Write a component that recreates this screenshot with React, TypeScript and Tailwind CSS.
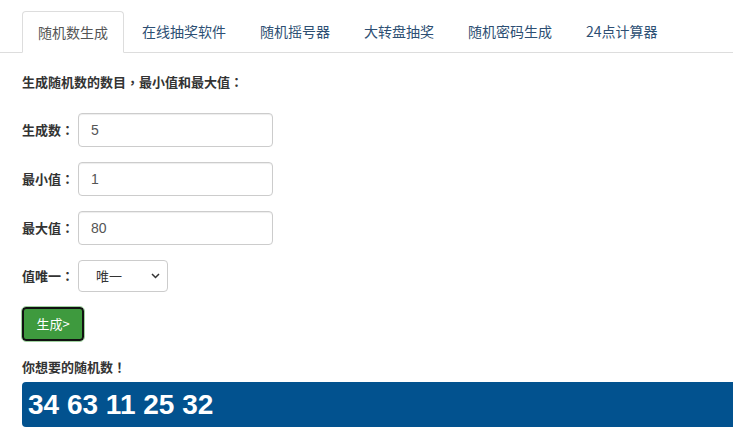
import React from "react";

const tabs = ["随机数生成", "在线抽奖软件", "随机摇号器", "大转盘抽奖", "随机密码生成", "24点计算器"];

const font = { fontFamily: '"Noto Sans CJK SC", "Liberation Sans", sans-serif' };

// centred full-width punctuation, like the reference's font
const P = ({ c }: { c: string }) => <span className="font-['Noto_Sans_CJK_TC',sans-serif]">{c}</span>;

function Field({ label, value }: { label: string; value: string }) {
  return (
    <div className="flex items-center h-[34px] mb-[15px]">
      <label className="w-[56px] text-[13px] font-bold text-[#333]">
        {label}
        <P c="：" />
      </label>
      <input
        readOnly
        value={value}
        className="w-[195px] h-[34px] border border-[#ccc] rounded-[4px] px-[12px] text-[14px] text-[#555] bg-white font-['Liberation_Sans',sans-serif] shadow-[inset_0_1px_1px_rgba(0,0,0,0.075)] outline-none"
      />
    </div>
  );
}

export default function App() {
  return (
    <div className="w-[733px] h-[440px] bg-white overflow-hidden" style={font}>
      {/* Tabs */}
      <div className="pt-[11px] pl-[22px] border-b border-[#ddd] flex">
        {tabs.map((t, i) => (
          <div
            key={t}
            className={
              i === 0
                ? "mr-[2px] -mb-px px-[15px] h-[42px] flex items-center text-[14px] text-[#555] bg-white border border-[#ddd] border-b-white rounded-t-[4px]"
                : "mr-[2px] px-[16px] h-[41px] flex items-center text-[14px] text-[#2d4f73]"
            }
          >
            {t}
          </div>
        ))}
      </div>

      <div className="pl-[22px]">
        <div className="mt-[19px] mb-[21px] text-[13px] font-bold text-[#333] leading-[20px]">
          生成随机数的数目<P c="，" />最小值和最大值<P c="：" />
        </div>

        <Field label="生成数" value="5" />
        <Field label="最小值" value="1" />
        <Field label="最大值" value="80" />

        <div className="flex items-center h-[32px] mt-[5px] mb-[15px]">
          <label className="w-[56px] text-[13px] font-bold text-[#333]">
            值唯一<P c="：" />
          </label>
          <div className="relative w-[90px] h-[32px] border border-[#ccc] rounded-[4px] bg-white flex items-center">
            <span className="pl-[17px] text-[13px] text-[#333]">唯一</span>
            <svg className="absolute right-[7px] top-[12px]" width="9" height="6" viewBox="0 0 9 6">
              <path d="M1 1 L4.5 4.5 L8 1" fill="none" stroke="#333" strokeWidth="1.5" />
            </svg>
          </div>
        </div>

        <button className="w-[62px] h-[34px] rounded-[4px] bg-[#3e9a3e] text-white text-[13px] border-2 border-[#111] outline outline-1 outline-[#9fd19f] flex items-center justify-center">
          生成&gt;
        </button>

        <div className="mt-[17px] text-[13px] font-bold text-[#333] leading-[18px]">
          你想要的随机数<P c="！" />
        </div>

        <div className="mt-[6px] h-[45px] bg-[#02528f] rounded-l-[4px] flex items-center pl-[6px] text-white text-[28px] font-bold font-['Liberation_Sans',sans-serif]">
          34 63 11 25 32
        </div>
      </div>
    </div>
  );
}
